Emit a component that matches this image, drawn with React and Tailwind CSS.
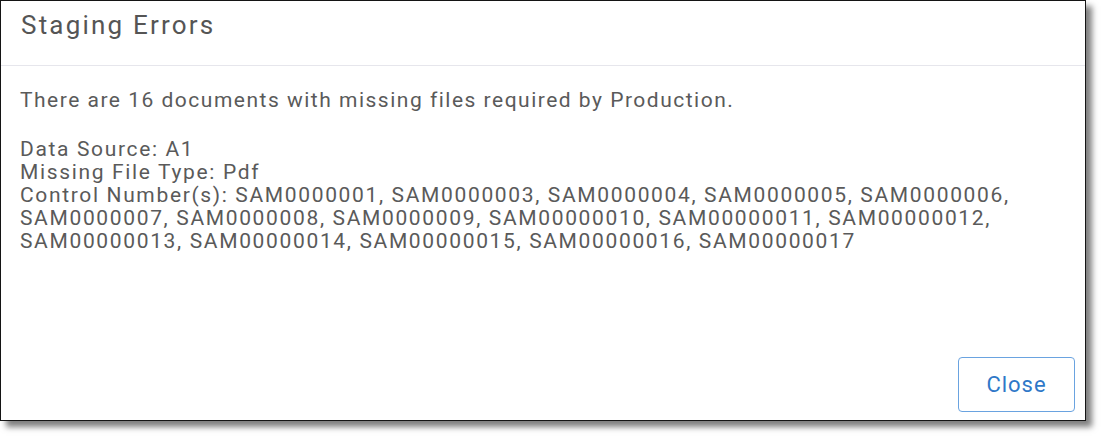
export default function App() {
  const controls = [
    'SAM0000001', 'SAM0000003', 'SAM0000004', 'SAM0000005', 'SAM0000006',
    'SAM0000007', 'SAM0000008', 'SAM0000009', 'SAM00000010', 'SAM00000011',
    'SAM00000012', 'SAM00000013', 'SAM00000014', 'SAM00000015', 'SAM00000016',
    'SAM00000017',
  ];

  return (
    <div className="w-[1101px] h-[436px] bg-white" style={{ fontFamily: 'Roboto, "Liberation Sans", sans-serif' }}>
      <div className="w-[1086px] h-[421px] bg-white border border-[#141414] shadow-[6px_6px_6px_rgba(0,0,0,0.5)] flex flex-col">
        <div className="h-[65px] shrink-0 border-b border-[#e6e6ec] pl-[20px] pt-[9px]">
          <h2 className="text-[26px] leading-[30px] tracking-[2.2px] text-[#555]">Staging Errors</h2>
        </div>

        <div className="flex-1 pl-[19px] pr-[16px] pt-[23px] text-[21px] leading-[23px] text-[#5a5a5a]">
          <p className="tracking-[1.5px]">There are 16 documents with missing files required by Production.</p>
          <div className="mt-[26px] tracking-[1.65px]">
            <div>Data Source: A1</div>
            <div>Missing File Type: Pdf</div>
            <div>Control Number(s): {controls.join(', ')}</div>
          </div>
        </div>

        <div className="flex justify-end pr-[10px] pb-[8px]">
          <button className="w-[117px] h-[55px] rounded-[4px] border border-[#6aa3e0] text-[#2f78c8] text-[22px] tracking-[1px]">
            Close
          </button>
        </div>
      </div>
    </div>
  );
}
